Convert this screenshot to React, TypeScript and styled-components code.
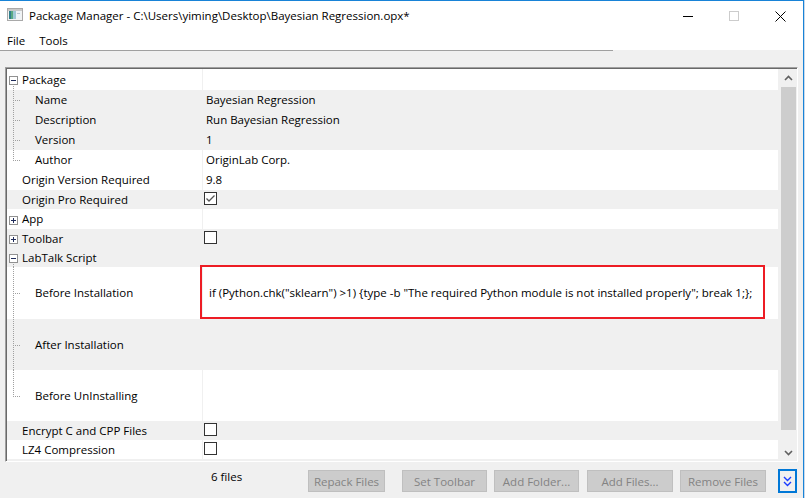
import React from "react";
import styled, { createGlobalStyle } from "styled-components";

const GlobalStyle = createGlobalStyle`
  html, body {
    margin: 0;
    padding: 0;
    width: 805px;
    height: 498px;
    overflow: hidden;
    background: #9fb9d6;
  }
  body {
    font-family: "Open Sans", "Noto Sans", sans-serif;
    font-size: 11.5px;
    color: #000;
  }
  #root { width: 805px; height: 498px; }
`;

const Screen = styled.div`
  display: flex;
  width: 805px;
  height: 498px;
`;

const Window = styled.div`
  width: 804px;
  height: 498px;
  box-sizing: border-box;
  border-top: 1px solid #1883d7;
  border-right: 1px solid #1883d7;
  display: flex;
  flex-direction: column;
  background: #f0f0f0;
`;

const DesktopEdge = styled.div`
  flex: 1;
  background: #c9d9ea;
`;

const TitleBar = styled.div`
  height: 30px;
  flex-shrink: 0;
  background: #fff;
  display: flex;
  align-items: center;
  padding-bottom: 1px;
  box-sizing: border-box;
`;

const AppIcon = styled.svg`
  margin-left: 7px;
  align-self: flex-start;
  margin-top: 7px;
  flex-shrink: 0;
`;

const TitleText = styled.div`
  margin-left: 6px;
  font-size: 11.5px;
  white-space: nowrap;
  flex: 1;
`;

const Controls = styled.div`
  display: flex;
  height: 30px;
  align-self: flex-start;
`;

const ControlButton = styled.div`
  width: 46px;
  height: 30px;
  display: flex;
  align-items: center;
  justify-content: center;
`;

const MenuBar = styled.div`
  height: 19px;
  flex-shrink: 0;
  background: #fff;
  display: flex;
  align-items: center;
`;

const MenuItem = styled.div`
  padding: 0 7px;
  font-size: 11.5px;
`;

const MenuRule = styled.div`
  width: 613px;
  height: 1px;
  flex-shrink: 0;
  background: #a0a0a0;
`;

const Content = styled.div`
  flex: 1;
  display: flex;
  flex-direction: column;
  padding: 16px 5px 0 5px;
`;

const GridOuter = styled.div`
  height: 395px;
  box-sizing: border-box;
  border-style: solid;
  border-width: 1px;
  border-color: #a0a0a0 #ffffff #ffffff #a0a0a0;
  flex-shrink: 0;
`;

const GridInner = styled.div`
  height: 100%;
  box-sizing: border-box;
  border-top: 1px solid #696969;
  border-left: 1px solid #696969;
  display: flex;
`;

const RowList = styled.div`
  flex: 0 0 771px;
  display: flex;
  flex-direction: column;
  background: #f0f0f0;
`;

const Row = styled.div<{ $h: number; $alt: boolean }>`
  display: flex;
  height: ${(p) => p.$h}px;
  flex-shrink: 0;
  background: ${(p) => (p.$alt ? "#f0f0f0" : "#ffffff")};
`;

const LabelCell = styled.div`
  width: 196px;
  box-sizing: border-box;
  border-right: 1px solid #f0f0f0;
  display: flex;
  align-items: center;
  flex-shrink: 0;
`;

const LabelText = styled.span`
  white-space: nowrap;
  padding-bottom: 1px;
`;

const ValueCell = styled.div<{ $highlight?: boolean }>`
  flex: 1;
  display: flex;
  align-items: center;
  padding-left: 1px;
  position: relative;
  ${(p) =>
    p.$highlight
      ? `
    &::after {
      content: "";
      position: absolute;
      left: -3px;
      top: -2px;
      width: 565px;
      height: 54px;
      box-sizing: border-box;
      border: 2px solid #ed1c24;
      pointer-events: none;
    }
  `
      : ""}
`;

const ValueText = styled.span<{ $code?: boolean }>`
  padding-left: ${(p) => (p.$code ? 5 : 2)}px;
  padding-bottom: 1px;
  white-space: nowrap;
`;

const CheckBox = styled.div`
  width: 13px;
  height: 13px;
  box-sizing: border-box;
  border: 1px solid #333333;
  background: #fff;
  align-self: flex-start;
  margin-top: 2px;
  display: flex;
  align-items: center;
  justify-content: center;
`;

const ScrollBar = styled.div`
  width: 17px;
  margin-left: 2px;
  display: flex;
  flex-direction: column;
  background: #f0f0f0;
`;

const ScrollArrow = styled.div`
  height: 17px;
  flex-shrink: 0;
  display: flex;
  align-items: center;
  justify-content: center;
`;

const ScrollTrack = styled.div`
  flex: 1;
  display: flex;
  flex-direction: column;
`;

const ScrollThumb = styled.div`
  margin: 1px 1px 0 1px;
  height: 343px;
  background: #cdcdcd;
`;

const BottomBar = styled.div`
  flex: 1;
  display: flex;
  align-items: flex-start;
  padding: 8px 0 0 206px;
`;

const Status = styled.div`
  width: 97px;
  line-height: 14px;
  font-size: 11.5px;
`;

const Button = styled.div<{ $w: number; $ml: number }>`
  width: ${(p) => p.$w}px;
  margin-left: ${(p) => p.$ml}px;
  height: 22px;
  flex-shrink: 0;
  box-sizing: border-box;
  border: 1px solid #bfbfbf;
  background: #cccccc;
  color: #838383;
  font-size: 11.5px;
  display: flex;
  align-items: center;
  justify-content: center;
  white-space: nowrap;
`;

const ToggleButton = styled.div`
  width: 19px;
  height: 24px;
  flex-shrink: 0;
  margin-left: 12px;
  margin-top: -1px;
  box-sizing: border-box;
  border: 2px solid #0078d7;
  background: #f0f0f0;
  display: flex;
  align-items: center;
  justify-content: center;
`;

type Kind = "open" | "closed" | "leaf" | "child" | "last";

interface RowData {
  label: string;
  kind: Kind;
  h: number;
  alt: boolean;
  value?: string;
  code?: string;
  check?: boolean;
  highlight?: boolean;
}

const rows: RowData[] = [
  { label: "Package", kind: "open", h: 21, alt: false },
  { label: "Name", kind: "child", h: 20, alt: true, value: "Bayesian Regression" },
  { label: "Description", kind: "child", h: 20, alt: true, value: "Run Bayesian Regression" },
  { label: "Version", kind: "child", h: 20, alt: true, value: "1" },
  { label: "Author", kind: "last", h: 20, alt: false, value: "OriginLab Corp." },
  { label: "Origin Version Required", kind: "leaf", h: 20, alt: false, value: "9.8" },
  { label: "Origin Pro Required", kind: "leaf", h: 19, alt: true, check: true },
  { label: "App", kind: "closed", h: 20, alt: false },
  { label: "Toolbar", kind: "closed", h: 19, alt: true, check: false },
  { label: "LabTalk Script", kind: "open", h: 19, alt: true },
  {
    label: "Before Installation",
    kind: "child",
    h: 52,
    alt: false,
    code: 'if (Python.chk("sklearn") >1) {type -b "The required Python module is not installed properly"; break 1;};',
    highlight: true,
  },
  { label: "After Installation", kind: "child", h: 51, alt: true },
  { label: "Before UnInstalling", kind: "last", h: 51, alt: false },
  { label: "Encrypt C and CPP Files", kind: "leaf", h: 19, alt: true, check: false },
  { label: "LZ4 Compression", kind: "leaf", h: 19, alt: false, check: false },
];

const DOT = "#a0a0a0";

function TreeGutter({ kind, h }: { kind: Kind; h: number }) {
  const isChild = kind === "child" || kind === "last";
  const w = isChild ? 28 : 15;
  const boxTop = Math.round((h - 9) / 2) + 1;
  const mid = Math.round(h / 2) + 0.5;
  return (
    <svg width={w} height={h} style={{ flexShrink: 0, display: "block" }} shapeRendering="crispEdges">
      {(kind === "open" || kind === "closed") && (
        <g>
          <rect x={2.5} y={boxTop + 0.5} width={8} height={8} fill="#fff" stroke="#919191" />
          <line x1={4} x2={9} y1={boxTop + 4.5} y2={boxTop + 4.5} stroke="#1f2b5a" />
          {kind === "closed" && (
            <line x1={6.5} x2={6.5} y1={boxTop + 2} y2={boxTop + 7} stroke="#1f2b5a" />
          )}
        </g>
      )}
      {kind === "open" && (
        <line x1={6.5} x2={6.5} y1={boxTop + 10} y2={h} stroke={DOT} strokeDasharray="1 1" />
      )}
      {isChild && (
        <g>
          <line
            x1={6.5}
            x2={6.5}
            y1={0}
            y2={kind === "last" ? mid + 1 : h}
            stroke={DOT}
            strokeDasharray="1 1"
          />
          <line x1={8} x2={14} y1={mid} y2={mid} stroke={DOT} strokeDasharray="1 1" />
        </g>
      )}
    </svg>
  );
}

function Check({ checked }: { checked: boolean }) {
  return (
    <CheckBox>
      {checked && (
        <svg width="11" height="11" viewBox="0 0 11 11">
          <polyline points="1.5,5.5 4,8 9.5,2.5" fill="none" stroke="#555" strokeWidth="1.3" />
        </svg>
      )}
    </CheckBox>
  );
}

function PropRow({ r }: { r: RowData }) {
  return (
    <Row $h={r.h} $alt={r.alt}>
      <LabelCell>
        <TreeGutter kind={r.kind} h={r.h} />
        <LabelText>{r.label}</LabelText>
      </LabelCell>
      <ValueCell $highlight={r.highlight}>
        {r.value && <ValueText>{r.value}</ValueText>}
        {r.code && <ValueText $code>{r.code}</ValueText>}
        {r.check !== undefined && <Check checked={r.check} />}
      </ValueCell>
    </Row>
  );
}

const buttons = [
  { label: "Repack Files", w: 77, ml: 0 },
  { label: "Set Toolbar", w: 85, ml: 17 },
  { label: "Add Folder...", w: 85, ml: 7 },
  { label: "Add Files...", w: 86, ml: 8 },
  { label: "Remove Files", w: 86, ml: 7 },
];

export default function App() {
  return (
    <>
      <GlobalStyle />
      <Screen>
        <Window>
          <TitleBar>
            <AppIcon width="16" height="14" viewBox="0 0 16 14">
              <rect x="0.5" y="0.5" width="15" height="12" fill="#f2f2f2" stroke="#a9a9a9" />
              <rect x="1" y="1" width="14" height="2" fill="#c9c9c9" />
              <rect x="2" y="3" width="2" height="8" fill="#2f7f8c" />
              <rect x="4" y="3" width="2" height="8" fill="#5aa982" />
              <rect x="6" y="3" width="3" height="8" fill="#9fc8d6" />
              <rect x="9" y="3" width="5" height="8" fill="#eef3f6" />
              <rect x="10" y="5" width="3" height="1" fill="#b8c7d2" />
            </AppIcon>
            <TitleText>Package Manager - C:\Users\yiming\Desktop\Bayesian Regression.opx*</TitleText>
            <Controls>
              <ControlButton>
                <svg width="10" height="10" viewBox="0 0 10 10" shapeRendering="crispEdges">
                  <line x1="0" x2="10" y1="5.5" y2="5.5" stroke="#000" />
                </svg>
              </ControlButton>
              <ControlButton>
                <svg width="10" height="10" viewBox="0 0 10 10" shapeRendering="crispEdges">
                  <rect x="0.5" y="0.5" width="9" height="9" fill="none" stroke="#cccccc" />
                </svg>
              </ControlButton>
              <ControlButton>
                <svg width="11" height="11" viewBox="0 0 11 11">
                  <line x1="0.5" y1="0.5" x2="10.5" y2="10.5" stroke="#000" />
                  <line x1="10.5" y1="0.5" x2="0.5" y2="10.5" stroke="#000" />
                </svg>
              </ControlButton>
            </Controls>
          </TitleBar>
          <MenuBar>
            <MenuItem>File</MenuItem>
            <MenuItem>Tools</MenuItem>
          </MenuBar>
          <MenuRule />
          <Content>
            <GridOuter>
              <GridInner>
                <RowList>
                  {rows.map((r) => (
                    <PropRow key={r.label} r={r} />
                  ))}
                </RowList>
                <ScrollBar>
                  <ScrollArrow>
                    <svg width="9" height="6" viewBox="0 0 9 6">
                      <polyline points="1,5 4.5,1.5 8,5" fill="none" stroke="#606060" strokeWidth="1.6" />
                    </svg>
                  </ScrollArrow>
                  <ScrollTrack>
                    <ScrollThumb />
                  </ScrollTrack>
                  <ScrollArrow>
                    <svg width="9" height="6" viewBox="0 0 9 6">
                      <polyline points="1,1 4.5,4.5 8,1" fill="none" stroke="#606060" strokeWidth="1.6" />
                    </svg>
                  </ScrollArrow>
                </ScrollBar>
              </GridInner>
            </GridOuter>
            <BottomBar>
              <Status>6 files</Status>
              {buttons.map((b) => (
                <Button key={b.label} $w={b.w} $ml={b.ml}>
                  {b.label}
                </Button>
              ))}
              <ToggleButton>
                <svg width="9" height="11" viewBox="0 0 9 11">
                  <polyline points="1,1 4.5,4.5 8,1" fill="none" stroke="#1a3cff" strokeWidth="1.4" />
                  <polyline points="1,6 4.5,9.5 8,6" fill="none" stroke="#1a3cff" strokeWidth="1.4" />
                </svg>
              </ToggleButton>
            </BottomBar>
          </Content>
        </Window>
        <DesktopEdge />
      </Screen>
    </>
  );
}
